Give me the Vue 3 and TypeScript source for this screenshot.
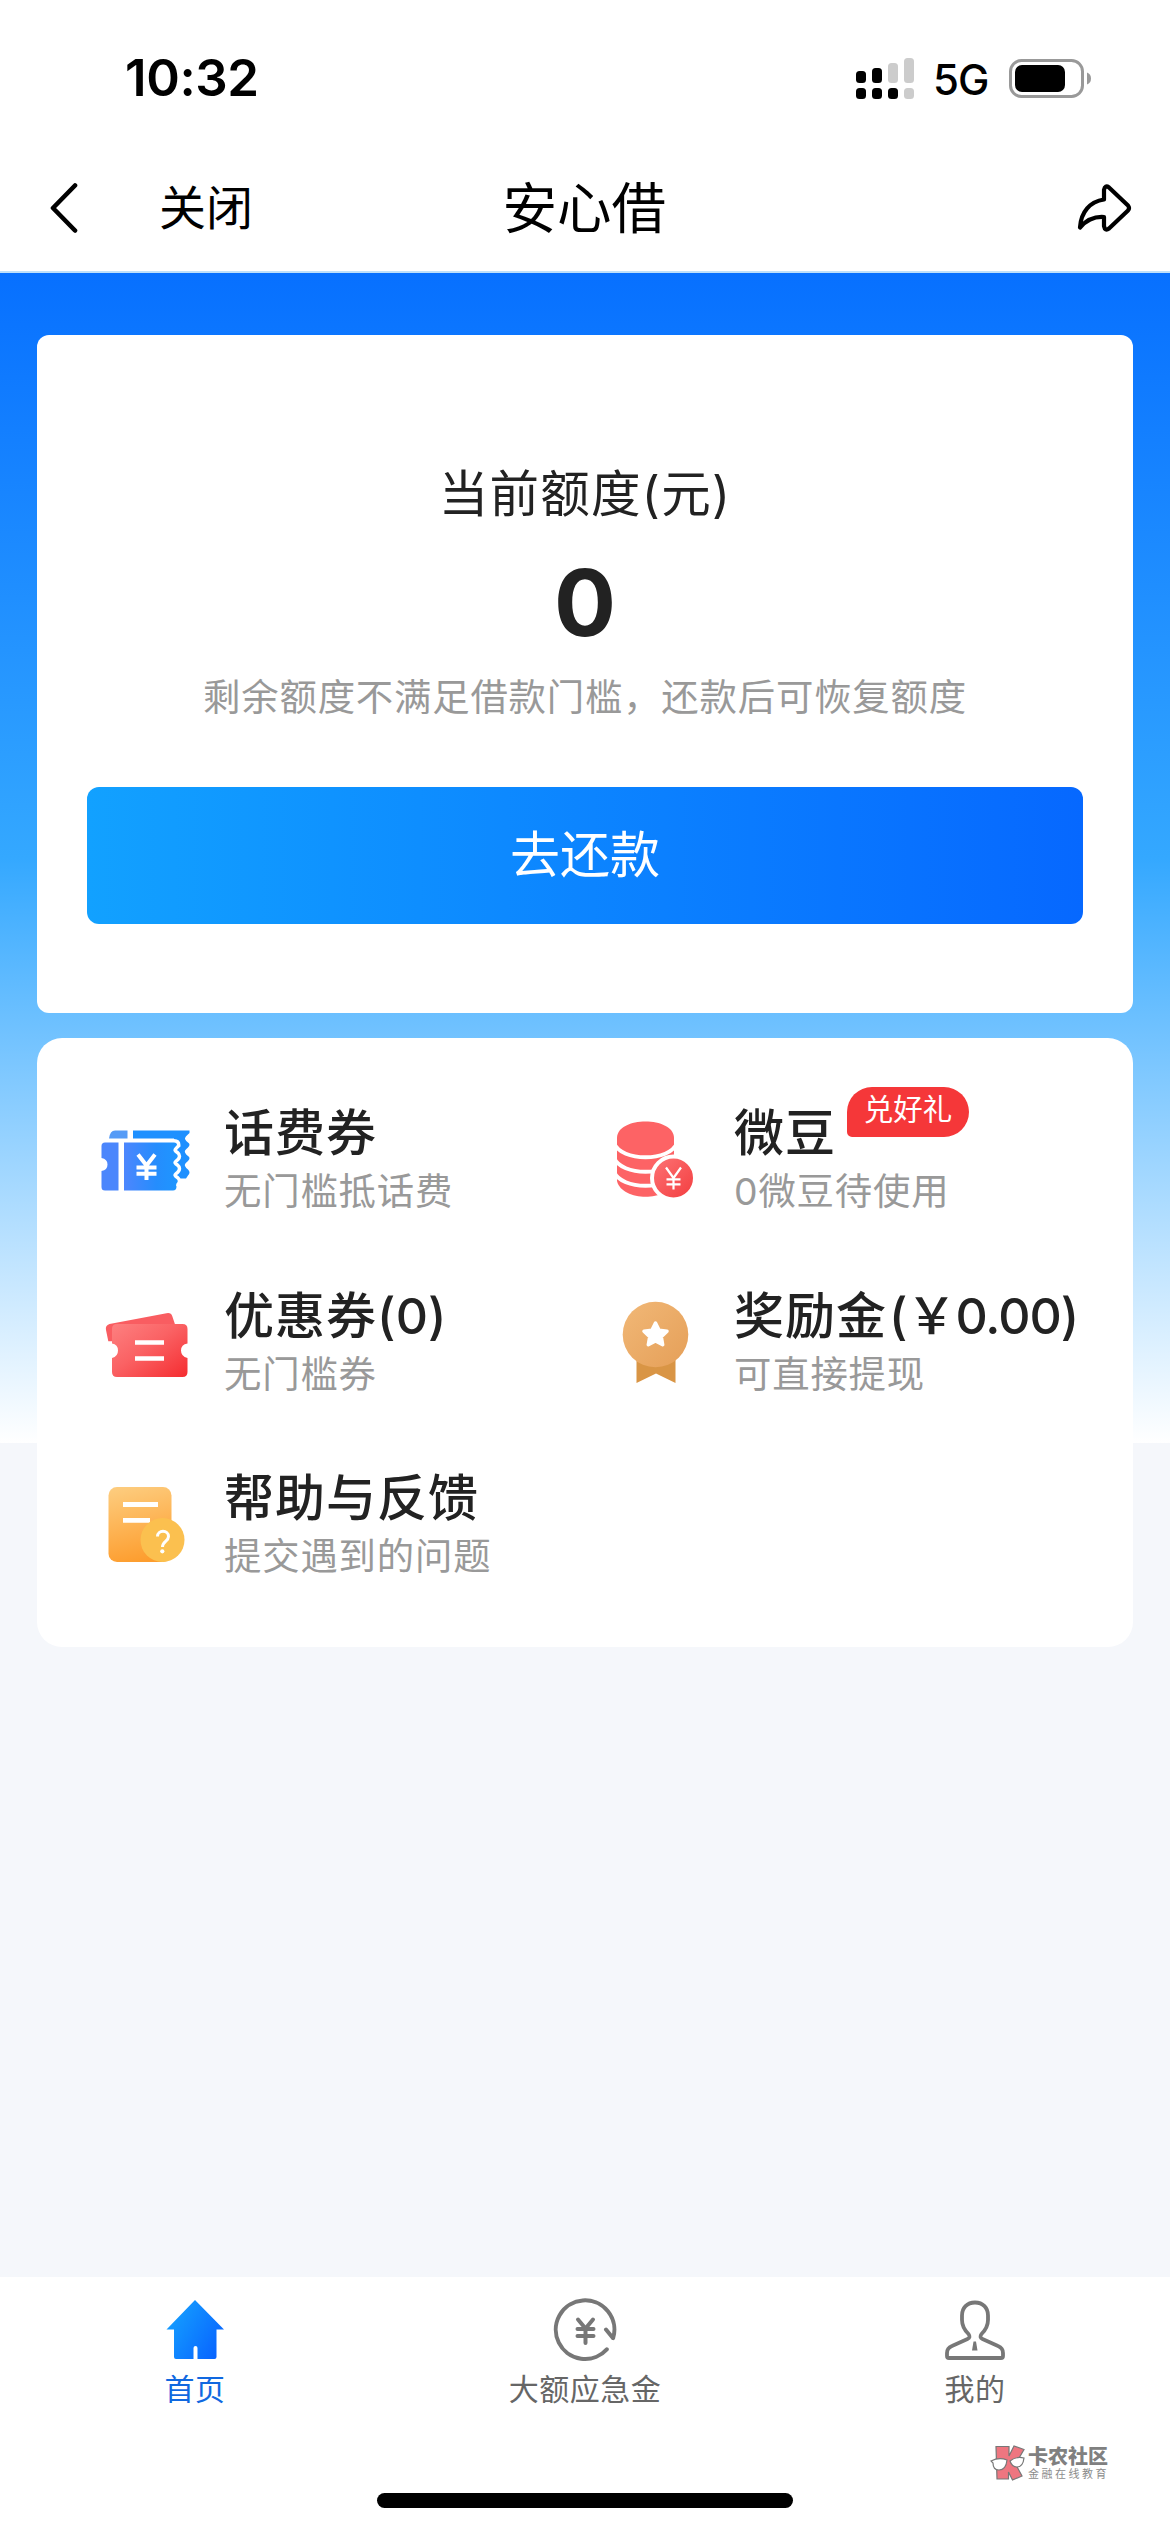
<script setup lang="ts">
interface Entry {
  id: string
  title: string
  note: string
  amount?: string
  badge?: string
}

const entries: Entry[] = [
  { id: 'phone', title: '话费券', note: '无门槛抵话费' },
  { id: 'beans', title: '微豆', note: '0微豆待使用', badge: '兑好礼' },
  { id: 'coupon', title: '优惠券', amount: '(0)', note: '无门槛券' },
  { id: 'bonus', title: '奖励金', amount: '(￥0.00)', note: '可直接提现' },
  { id: 'help', title: '帮助与反馈', note: '提交遇到的问题' },
]

const tabs = [
  { id: 'home', label: '首页' },
  { id: 'loan', label: '大额应急金' },
  { id: 'mine', label: '我的' },
]
</script>

<template>
  <div class="screen">
    <header class="status">
      <span class="time">10:32</span>
      <div class="status-right">
        <svg class="signal" width="58" height="42" viewBox="0 0 58 42">
          <rect x="0" y="13" width="10" height="12" rx="3.5" />
          <rect x="16" y="10" width="10" height="15" rx="3.5" />
          <rect x="32" y="5" width="10" height="20" rx="3.5" fill="#ccc" />
          <rect x="48" y="0" width="10" height="25" rx="3.5" fill="#ccc" />
          <rect x="0" y="30" width="10" height="11" rx="3.5" />
          <rect x="16" y="30" width="10" height="11" rx="3.5" />
          <rect x="32" y="30" width="10" height="11" rx="3.5" />
          <rect x="48" y="30" width="10" height="11" rx="3.5" fill="#ccc" />
        </svg>
        <span class="net">5G</span>
        <svg class="battery" width="83" height="39" viewBox="0 0 83 39">
          <rect x="1.5" y="1.5" width="72" height="36" rx="11" fill="none" stroke="#999" stroke-width="3" />
          <rect x="6" y="6" width="50" height="27" rx="7" />
          <path d="M78 13.5q4 1.500 4 6t-4 6z" fill="#999" />
        </svg>
      </div>
    </header>

    <nav class="navbar">
      <svg class="back" width="28" height="50" viewBox="0 0 28 50">
        <path d="M25 2.500 3 25 25 47.500" fill="none" stroke="#000" stroke-width="4.600" stroke-linecap="round" stroke-linejoin="round" />
      </svg>
      <span class="close">关闭</span>
      <h1>安心借</h1>
      <svg class="share" width="56" height="48" viewBox="0 0 56 48">
        <path d="M3 43.500C4 28 13 17.500 27 15.500V6Q28 .500 32 3.500L51 21.500Q53 24 51 26.500L32 44.500Q28 47.500 27 42V33Q13 32 3 43.500Z" fill="none" stroke="#000" stroke-width="4.200" stroke-linejoin="round" />
      </svg>
    </nav>

    <main class="body">
      <div class="sky">
        <section class="quota">
          <p class="quota-label">当前额度(元)</p>
          <p class="quota-value">0</p>
          <p class="quota-note">剩余额度不满足借款门槛，还款后可恢复额度</p>
          <button class="repay">去还款</button>
        </section>

        <section class="entries">
          <div v-for="e in entries" :key="e.id" class="entry">
            <svg v-if="e.id === 'phone'" class="icon" viewBox="95 1110 100 100">
              <defs>
                <linearGradient id="pb" x1="0" x2="1"><stop offset="0" stop-color="#4d86fd" /><stop offset=".6" stop-color="#258dfd" /><stop offset="1" stop-color="#1e96ff" /></linearGradient>
              </defs>
              <path d="M109 1138.500q1-8 6-8h12.500v8z" fill="#559bf6" />
              <path d="M133 1130.500H189.500V1133q-5 4-4.500 6 1 2 3 3.500 3 2 0 5-4 3-3 5t3 3.500q3 2 0 5-4 3-3 5t3 3.500q3 3 0 6l-2 3H174V1138.500H133z" fill="#1e90ff" />
              <path d="M124 1142.500H174q3 0 3 2.500-4.500 4-3.500 6t3 3q2.500 2 0 4.500-4 3-3 5t3 3q2.500 2 0 4.500-4 3-3 5t3 3q2.500 2 0 4.500-1 2 0 3 0 4-3.500 4H124z" fill="none" stroke="#fff" stroke-width="7" />
              <path d="M105 1142.500h13.500V1190.500H105q-3.500 0-3.500-3.500v-16q6-1 6-6.500t-6-6.500v-12q0-3.500 3.500-3.500z" fill="#4b86fc" />
              <path d="M124 1142.500H174q3 0 3 2.500-4.500 4-3.500 6t3 3q2.500 2 0 4.500-4 3-3 5t3 3q2.500 2 0 4.500-4 3-3 5t3 3q2.500 2 0 4.500-1 2 0 3 0 4-3.500 4H124z" fill="url(#pb)" />
              <path d="M138 1154.500l8.500 11 8.500-11M146.500 1165v15M136.500 1167.500h20M136.500 1173.800h20" fill="none" stroke="#fff" stroke-width="4" />
            </svg>

            <svg v-else-if="e.id === 'beans'" class="icon" viewBox="605 1110 100 100">
              <defs>
                <linearGradient id="cn" x1="0" y1="0" x2="1" y2="1"><stop offset="0" stop-color="#fd7476" /><stop offset="1" stop-color="#f33c3e" /></linearGradient>
              </defs>
              <path d="M617 1138h57v43c-5 21-52 21-57 0z" fill="#fd6365" />
              <path d="M617 1138c0-22 57-22 57 0z" fill="#fd6365" />
              <path d="M614 1143c7 19 56 19 63 0M614 1157.500c7 19 56 19 63 0M614 1171.500c7 19 56 19 63 0" fill="none" stroke="#fff" stroke-width="3.800" />
              <circle cx="673.500" cy="1178" r="21.500" fill="url(#cn)" stroke="#fff" stroke-width="4" />
              <path d="M666 1167.500l7.500 10.500 7.500-10.500M673.500 1178v11.500M666.500 1179.300h14M666.500 1184.300h14" fill="none" stroke="#fff" stroke-width="2.200" />
            </svg>

            <svg v-else-if="e.id === 'coupon'" class="icon" viewBox="95 1293 100 100">
              <defs>
                <linearGradient id="rt" x1="0" y1="0" x2="1" y2="1"><stop offset="0" stop-color="#fd8080" /><stop offset=".45" stop-color="#fa6264" /><stop offset="1" stop-color="#f52c30" /></linearGradient>
              </defs>
              <path d="M106 1330q-1-4.500 3.500-6l57-10.800q4.500-1 5.800 3l3 9-50 16h-17z" fill="#f95d61" />
              <path d="M117 1324h65.500q5 0 5 5v14.500q-6.500 1-6.500 7t6.500 7.500v14q0 5-5 5H117q-5 0-5-5v-14q6-1.500 6-7.500t-6-7v-14.500q0-5 5-5z" fill="url(#rt)" />
              <path d="M135 1342.500h29M135 1358.500h29" stroke="#fff" stroke-width="4.600" />
            </svg>

            <svg v-else-if="e.id === 'bonus'" class="icon" viewBox="605 1293 100 100">
              <defs>
                <linearGradient id="md" x1="0" y1="0" x2="1" y2="1"><stop offset="0" stop-color="#f1b877" /><stop offset="1" stop-color="#e59f58" /></linearGradient>
              </defs>
              <path d="M636.500 1352h39v31l-19.500-9.500-19.500 9.500z" fill="#d99545" />
              <circle cx="655.500" cy="1334.500" r="32.800" fill="url(#md)" />
              <path d="M655.500 1323l3.600 7.200 7.900 1.100-5.700 5.500 1.400 7.900-7.200-3.700-7.200 3.700 1.400-7.900-5.700-5.500 7.900-1.100z" fill="#fff" stroke="#fff" stroke-width="3.500" stroke-linejoin="round" />
            </svg>

            <svg v-else class="icon" viewBox="95 1475 100 100">
              <defs>
                <linearGradient id="hp" x1=".3" y1="0" x2=".5" y2="1"><stop offset="0" stop-color="#fdcb7c" /><stop offset="1" stop-color="#fd9d2e" /></linearGradient>
              </defs>
              <rect x="108.500" y="1487" width="63" height="75" rx="8.500" fill="url(#hp)" />
              <path d="M123 1504.500h35M123 1520.300h27" stroke="#fff" stroke-width="4.800" />
              <circle cx="162.500" cy="1540" r="22" fill="#fbc04f" />
              <path d="M157.500 1536.500c0-7 11-7 11 0 0 5-6 5-6 10.500" fill="none" stroke="#fff" stroke-width="3" />
              <circle cx="162.300" cy="1551.300" r="2.100" fill="#fff" />
            </svg>

            <div class="entry-text">
              <p class="entry-title">{{ e.title }}<span v-if="e.amount" :class="['amount', e.id]">{{ e.amount }}</span><span v-if="e.badge" class="badge">{{ e.badge }}</span></p>
              <p class="entry-note">{{ e.note }}</p>
            </div>
          </div>
        </section>
      </div>
    </main>

    <footer class="tabbar">
      <div class="tabs">
        <div v-for="t in tabs" :key="t.id" class="tab" :class="{ active: t.id === 'home' }">
          <svg v-if="t.id === 'home'" width="64" height="64" viewBox="0 0 64 64">
            <defs>
              <linearGradient id="hm" x1="0" y1=".2" x2="1" y2=".8"><stop offset="0" stop-color="#15a2ff" /><stop offset="1" stop-color="#0863ff" /></linearGradient>
            </defs>
            <path d="M32 2 61 31.500H53.500V59q0 2-2 2H34.500V50q0-2-2-2t-2 2V61H13q-2 0-2-2V31.500H3.500z" fill="url(#hm)" />
          </svg>
          <svg v-else-if="t.id === 'loan'" width="64" height="64" viewBox="0 0 64 64">
            <g fill="none" stroke="#777" stroke-width="4" stroke-linecap="round" stroke-linejoin="round">
              <path d="M53.800 51.300A29.300 29.300 0 1 1 60.100 40.200L53 31.500" />
              <path d="M25 21.500l7.500 9 7.500-9M32.500 31v14M24.500 31h16M24.500 38h16" />
            </g>
          </svg>
          <svg v-else width="64" height="64" viewBox="0 0 64 64">
            <path d="M32 4.500C24 4.500 19 10 19 17.500V22C19 29 22 32.500 25.500 36Q28 39.500 24.500 41L9 48Q4 50 4 55V58Q4 60 6 60H58Q60 60 60 58V55Q60 50 55 48L39.500 41Q36 39.500 38.500 36C42 32.500 45 29 45 22V17.500C45 10 40 4.500 32 4.500Z" fill="none" stroke="#777" stroke-width="3.800" />
            <path d="M30.500 43.500h2.500l1.500 9h-5.500z" fill="#777" />
          </svg>
          <span>{{ t.label }}</span>
        </div>
      </div>
      <div class="brand">
        <svg width="36" height="38" viewBox="0 0 36 38">
          <g stroke="#777" stroke-width="1.200" fill="#ee7680">
            <path d="M6 2.500H19V12L24 2 34 5.500 25.500 20 32 32 22.500 36 18.500 28V35H7z" />
            <path d="M1 17q8-4 16-1-1 10-8 10-6 0-6-7z" fill="#fff" />
            <path d="M20 17q6-5 14-3-1 9-7 9-5 0-7-6z" fill="#fff" />
          </g>
        </svg>
        <div class="brand-text">
          <strong>卡农社区</strong>
          <small>金融在线教育</small>
        </div>
      </div>
      <div class="home-bar"></div>
    </footer>
  </div>
</template>

<style>
html,
body {
  margin: 0;
  background: #fff;
}
</style>

<style scoped>
.screen {
  width: 1170px;
  height: 2532px;
  display: flex;
  flex-direction: column;
  overflow: hidden;
  background: #fff;
  color: #222;
  font-family: Inter, 'Noto Sans CJK SC', sans-serif;
}
p,
h1 {
  margin: 0;
  font-weight: 400;
}
svg {
  display: block;
  flex: none;
}
.status {
  height: 157px;
  box-sizing: border-box;
  padding: 0 78px 0 125px;
  display: flex;
  justify-content: space-between;
  align-items: center;
  color: #000;
}
.time {
  padding-bottom: 2px;
  font-size: 51px;
  font-weight: 600;
  letter-spacing: -0.4px;
}
.status-right {
  display: flex;
  align-items: center;
}
.net {
  width: 60px;
  margin: 2px 16px 0 19px;
  font-size: 42px;
  font-weight: 500;
  line-height: 42px;
  letter-spacing: -1px;
}
.navbar {
  height: 116px;
  box-sizing: border-box;
  padding: 0 37px 13px 50px;
  display: grid;
  grid-template-columns: 28px 1fr auto 1fr;
  align-items: center;
  border-bottom: 2px solid #bfe0fa;
  color: #000;
}
.close {
  padding-left: 81px;
  font-size: 47px;
  line-height: 60px;
}
.navbar h1 {
  width: 164px;
  margin-right: 42px;
  font-size: 54.500px;
  line-height: 70px;
}
.share {
  justify-self: end;
}
.body {
  flex: 1;
  background: #f5f7fb;
}
.sky {
  height: 1170px;
  box-sizing: border-box;
  padding: 62px 37px 0;
  background: linear-gradient(180deg, #0770ff 0%, #34a8ff 50%, #fff 100%);
}
.quota {
  height: 678px;
  box-sizing: border-box;
  padding: 124px 50px 0;
  border-radius: 12px;
  background: #fff;
  text-align: center;
}
.quota-label {
  font-size: 49.500px;
  line-height: 70px;
  letter-spacing: 1.300px;
}
.quota-value {
  margin-top: 19px;
  font-size: 92px;
  font-weight: 700;
  line-height: 110px;
}
.quota-note {
  margin-top: 13px;
  font-size: 37.400px;
  line-height: 54px;
  letter-spacing: 0.8px;
  color: #999;
  white-space: nowrap;
}
.repay {
  display: block;
  width: 996px;
  height: 137px;
  margin-top: 62px;
  padding: 0 0 10px;
  border: 0;
  border-radius: 12px;
  background: linear-gradient(90deg, #12a1ff, #0668ff);
  color: #fff;
  font: inherit;
  font-size: 50px;
}
.entries {
  height: 609px;
  box-sizing: border-box;
  margin-top: 25px;
  padding: 65px 0 0 58px;
  display: grid;
  grid-template-columns: 510px 1fr;
  grid-auto-rows: 182.5px;
  align-content: start;
  border-radius: 25px;
  background: #fff;
}
.entry {
  display: flex;
  align-items: flex-start;
  gap: 29px;
}
.icon {
  width: 100px;
  height: 100px;
  margin-top: 7px;
}
.entry-title {
  position: relative;
  width: max-content;
  font-size: 50px;
  font-weight: 500;
  line-height: 60px;
  letter-spacing: 1px;
  white-space: nowrap;
}
.amount.coupon {
  letter-spacing: 0.2px;
}
.amount.bonus {
  margin-left: 2px;
  letter-spacing: -1px;
}
.badge {
  position: absolute;
  left: 113px;
  top: -16px;
  width: 122px;
  height: 50px;
  border-radius: 25px 25px 25px 5px;
  background: #f53739;
  color: #fff;
  font-size: 29.500px;
  font-weight: 400;
  line-height: 45px;
  letter-spacing: 0;
  text-align: center;
}
.entry-note {
  font-size: 37.400px;
  line-height: 58px;
  letter-spacing: 0.8px;
  color: #999;
}
.tabbar {
  height: 255px;
  box-sizing: border-box;
  padding-top: 21px;
  background: #fff;
}
.tabs {
  display: flex;
  height: 146px;
}
.tab {
  flex: 1;
  display: flex;
  flex-direction: column;
  align-items: center;
  gap: 2px;
  font-size: 30px;
  line-height: 50px;
  letter-spacing: 0.5px;
  color: #666;
}
.tab.active {
  color: #1068e0;
}
.brand {
  display: flex;
  height: 38px;
  padding-left: 990px;
  color: #808080;
}
.brand-text {
  display: flex;
  flex-direction: column;
  padding: 3px 0 0 2px;
}
.brand strong {
  font-size: 20px;
  font-weight: 900;
  line-height: 20px;
}
.brand small {
  margin-top: 1px;
  font-size: 11px;
  line-height: 13px;
  letter-spacing: 2.500px;
  color: #8c8c8c;
}
.home-bar {
  width: 416px;
  height: 15px;
  margin: 11px auto 0;
  border-radius: 8px;
  background: #000;
}
</style>
